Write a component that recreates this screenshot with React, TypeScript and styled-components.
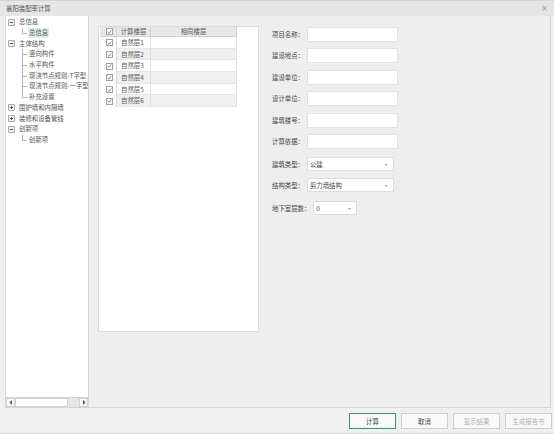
import styled, { createGlobalStyle } from 'styled-components'

const GlobalStyle = createGlobalStyle`
  html, body {
    margin: 0;
    padding: 0;
    background: #f0f0f0;
  }
  * {
    box-sizing: border-box;
  }
`

type TreeNode = {
  label: string
  level: 0 | 1
  toggle?: '+' | '-'
  selected?: boolean
  last?: boolean
}

const tree: TreeNode[] = [
  { label: '总信息', level: 0, toggle: '-' },
  { label: '总信息', level: 1, selected: true, last: true },
  { label: '主体结构', level: 0, toggle: '-' },
  { label: '竖向构件', level: 1 },
  { label: '水平构件', level: 1 },
  { label: '现浇节点规则-T字型', level: 1 },
  { label: '现浇节点规则-一字型', level: 1 },
  { label: '补充设置', level: 1, last: true },
  { label: '围护墙和内隔墙', level: 0, toggle: '+' },
  { label: '装修和设备管线', level: 0, toggle: '+' },
  { label: '创新项', level: 0, toggle: '-' },
  { label: '创新项', level: 1, last: true },
]

const floors = ['自然层1', '自然层2', '自然层3', '自然层4', '自然层5', '自然层6']

const textFields = ['项目名称：', '建设地点：', '建设单位：', '设计单位：', '建筑楼号：', '计算依据：']

const Check = () => (
  <CheckBox>
    <svg width="6" height="6" viewBox="0 0 6 6">
      <path d="M0.8 3.1 L2.4 4.6 L5.2 1.2" fill="none" stroke="#555" strokeWidth="0.9" />
    </svg>
  </CheckBox>
)

export default function App() {
  return (
    <>
      <GlobalStyle />
      <Window>
        <TitleBar>
          <Title>襄阳装配率计算</Title>
          <Close>×</Close>
        </TitleBar>

        <Body>
          <Sidebar>
            <Tree>
              {tree.map((node, i) => (
                <TreeRow key={i} $level={node.level}>
                  {node.level === 0 ? (
                    <Toggle>{node.toggle === '+' ? <Plus /> : <Minus />}</Toggle>
                  ) : (
                    <Elbow $last={node.last} />
                  )}
                  <TreeLabel $selected={node.selected}>{node.label}</TreeLabel>
                </TreeRow>
              ))}
            </Tree>
            <HScroll>
              <ScrollArrow>
                <svg width="4" height="5" viewBox="0 0 4 5">
                  <path d="M3 0 L0.5 2.5 L3 5 Z" fill="#555" />
                </svg>
              </ScrollArrow>
              <ScrollTrack>
                <ScrollThumb />
              </ScrollTrack>
              <ScrollArrow>
                <svg width="4" height="5" viewBox="0 0 4 5">
                  <path d="M1 0 L3.5 2.5 L1 5 Z" fill="#555" />
                </svg>
              </ScrollArrow>
            </HScroll>
          </Sidebar>

          <Main>
            <TablePanel>
              <Table>
                <HeadRow>
                  <CheckCell>
                    <Check />
                  </CheckCell>
                  <HeadCell $w={34}>计算楼层</HeadCell>
                  <HeadCell $w={86}>相同楼层</HeadCell>
                </HeadRow>
                {floors.map((f, i) => (
                  <BodyRow key={f}>
                    <CheckCell>
                      <Check />
                    </CheckCell>
                    <NameCell $alt={i % 2 === 1}>{f}</NameCell>
                    <SameCell $alt={i % 2 === 1} />
                  </BodyRow>
                ))}
              </Table>
            </TablePanel>

            <Form>
              {textFields.map((l, i) => (
                <FieldRow key={l} $top={i === 0 ? 0 : 6.4}>
                  <Label>{l}</Label>
                  <TextBox />
                </FieldRow>
              ))}
              <FieldRow $top={8.5}>
                <Label>建筑类型：</Label>
                <Select $w={87}>
                  公建
                  <Caret>▾</Caret>
                </Select>
              </FieldRow>
              <FieldRow $top={7}>
                <Label>结构类型：</Label>
                <Select $w={87}>
                  剪力墙结构
                  <Caret>▾</Caret>
                </Select>
              </FieldRow>
              <FieldRow $top={9}>
                <Label>地下室层数：</Label>
                <Select $w={44}>
                  0<Caret>▾</Caret>
                </Select>
              </FieldRow>
            </Form>
          </Main>
        </Body>

        <Footer>
          <Button $primary>计算</Button>
          <Button>取消</Button>
          <Button disabled>显示结果</Button>
          <Button disabled>生成报告书</Button>
        </Footer>
      </Window>
    </>
  )
}

const font = `"Noto Sans CJK SC", "Noto Sans", sans-serif`

const Window = styled.div`
  width: 554px;
  height: 434px;
  background: #f0f0f0;
  display: flex;
  flex-direction: column;
  font-family: ${font};
  font-size: 6.4px;
  color: #555;
  border-bottom: 1px solid #d8d8d8;
`

const TitleBar = styled.div`
  height: 16px;
  background: #e6e6e6;
  display: flex;
  align-items: center;
  justify-content: space-between;
  padding: 0 6px 0 6px;
  border-top: 1px solid #d6d6d6;
`

const Title = styled.span`
  color: #555;
`

const Close = styled.span`
  font-family: 'DejaVu Sans', sans-serif;
  font-size: 8px;
  color: #999;
`

const Body = styled.div`
  height: 392px;
  display: flex;
  padding-left: 5px;
`

const Sidebar = styled.div`
  width: 84px;
  display: flex;
  flex-direction: column;
  border: 1px solid #d4d4d4;
  border-top: none;
`

const Tree = styled.div`
  flex: 1;
  background: #fff;
  padding-top: 1px;
  overflow: hidden;
`

const TreeRow = styled.div<{ $level: 0 | 1 }>`
  height: 10.7px;
  display: flex;
  align-items: center;
  padding-left: ${({ $level }) => ($level === 0 ? 2 : 16)}px;
`

const Toggle = styled.span`
  flex-shrink: 0;
  width: 7px;
  height: 7px;
  border: 1px solid #a8a8a8;
  background: #f6f6f6;
  border-radius: 1px;
  display: flex;
  align-items: center;
  justify-content: center;
  margin-right: 3px;
`

const Minus = styled.span`
  width: 3px;
  height: 1px;
  background: #555;
`

const Plus = styled.span`
  width: 3px;
  height: 3px;
  background:
    linear-gradient(#555, #555) center / 3px 1px no-repeat,
    linear-gradient(#555, #555) center / 1px 3px no-repeat;
`

const Elbow = styled.span<{ $last?: boolean }>`
  flex-shrink: 0;
  width: 6px;
  height: 10.7px;
  position: relative;

  &::before {
    content: '';
    position: absolute;
    left: 0;
    top: 0;
    height: ${({ $last }) => ($last ? '50%' : '100%')};
    border-left: 1px solid #b5b5b5;
  }

  &::after {
    content: '';
    position: absolute;
    left: 0;
    top: 50%;
    width: 5px;
    border-top: 1px solid #b5b5b5;
  }
`

const TreeLabel = styled.span<{ $selected?: boolean }>`
  white-space: nowrap;
  padding: 1px 1px;
  line-height: 8px;
  background: ${({ $selected }) => ($selected ? '#dcefeb' : 'transparent')};
  color: #555;
`

const HScroll = styled.div`
  height: 10px;
  display: flex;
  background: #f0f0f0;
  border-top: 1px solid #d4d4d4;
`

const ScrollArrow = styled.div`
  width: 9px;
  display: flex;
  align-items: center;
  justify-content: center;
  background: #fafafa;
  border: 1px solid #d0d0d0;
`

const ScrollTrack = styled.div`
  flex: 1;
  background: #e6e6e6;
  display: flex;
`

const ScrollThumb = styled.div`
  width: 53px;
  background: #fff;
  border: 1px solid #d0d0d0;
`

const Main = styled.div`
  flex: 1;
  margin-right: 3px;
  background: #eeeeee;
  border-right: 1px solid #d6d6d6;
  border-bottom: 1px solid #d6d6d6;
  display: flex;
  align-items: flex-start;
  padding: 10px 0 0 9px;
`

const TablePanel = styled.div`
  width: 161px;
  height: 306px;
  background: #fff;
  border: 1px solid #dcdcdc;
  padding: 0 0 0 1px;
`

const Table = styled.div`
  display: flex;
  flex-direction: column;
  width: 137px;
`

const HeadRow = styled.div`
  display: flex;
  height: 10px;
  background: #e8e8e8;
  border-bottom: 1px solid #d0d0d0;
`

const BodyRow = styled.div`
  display: flex;
  height: 11.7px;
`

const CheckCell = styled.div`
  width: 17px;
  display: flex;
  align-items: center;
  justify-content: flex-end;
  padding-right: 3px;
  border-right: 1px solid #d6d6d6;
`

const CheckBox = styled.span`
  width: 7px;
  height: 7px;
  border: 1px solid #a0a0a0;
  background: #fff;
  display: flex;
  align-items: center;
  justify-content: center;
`

const HeadCell = styled.div<{ $w: number }>`
  width: ${({ $w }) => $w}px;
  display: flex;
  align-items: center;
  justify-content: center;
  border-right: 1px solid #d0d0d0;
  color: #555;
`

const NameCell = styled.div<{ $alt: boolean }>`
  width: 34px;
  display: flex;
  align-items: center;
  padding-left: 4px;
  background: ${({ $alt }) => ($alt ? '#f0f0f0' : '#fff')};
  border-right: 1px solid #e0e0e0;
  border-bottom: 1px solid #e6e6e6;
  color: #555;
`

const SameCell = styled.div<{ $alt: boolean }>`
  width: 86px;
  background: ${({ $alt }) => ($alt ? '#f0f0f0' : '#fff')};
  border-right: 1px solid #e0e0e0;
  border-bottom: 1px solid #e6e6e6;
`

const Form = styled.div`
  display: flex;
  flex-direction: column;
  margin-left: 13px;
  padding-top: 1px;
`

const FieldRow = styled.div<{ $top: number }>`
  display: flex;
  align-items: center;
  gap: 3px;
  min-height: 14px;
  margin-top: ${({ $top }) => $top}px;
`

const Label = styled.span`
  white-space: nowrap;
  color: #444;
`

const TextBox = styled.div`
  width: 91px;
  height: 15px;
  background: #fff;
  border: 1px solid #e2e2e2;
`

const Select = styled.div<{ $w: number }>`
  width: ${({ $w }) => $w}px;
  height: 14px;
  background: #fff;
  border: 1px solid #dcdcdc;
  display: flex;
  align-items: center;
  justify-content: space-between;
  padding: 0 6px 0 2px;
  color: #444;
`

const Caret = styled.span`
  font-size: 4px;
  color: #888;
  font-family: 'DejaVu Sans', sans-serif;
`

const Footer = styled.div`
  flex: 1;
  display: flex;
  align-items: center;
  justify-content: flex-end;
  gap: 5px;
  padding: 1px 2px 0 0;
`

const Button = styled.button<{ $primary?: boolean }>`
  width: 47px;
  height: 16px;
  padding: 0;
  font-family: ${font};
  font-size: 6.4px;
  color: ${({ disabled }) => (disabled ? '#b0b0b0' : '#444')};
  background: #f9f9f9;
  border: ${({ $primary }) => ($primary ? '1.5px solid #3f8f82' : '1px solid #cfcfcf')};
  border-radius: 0;
`
